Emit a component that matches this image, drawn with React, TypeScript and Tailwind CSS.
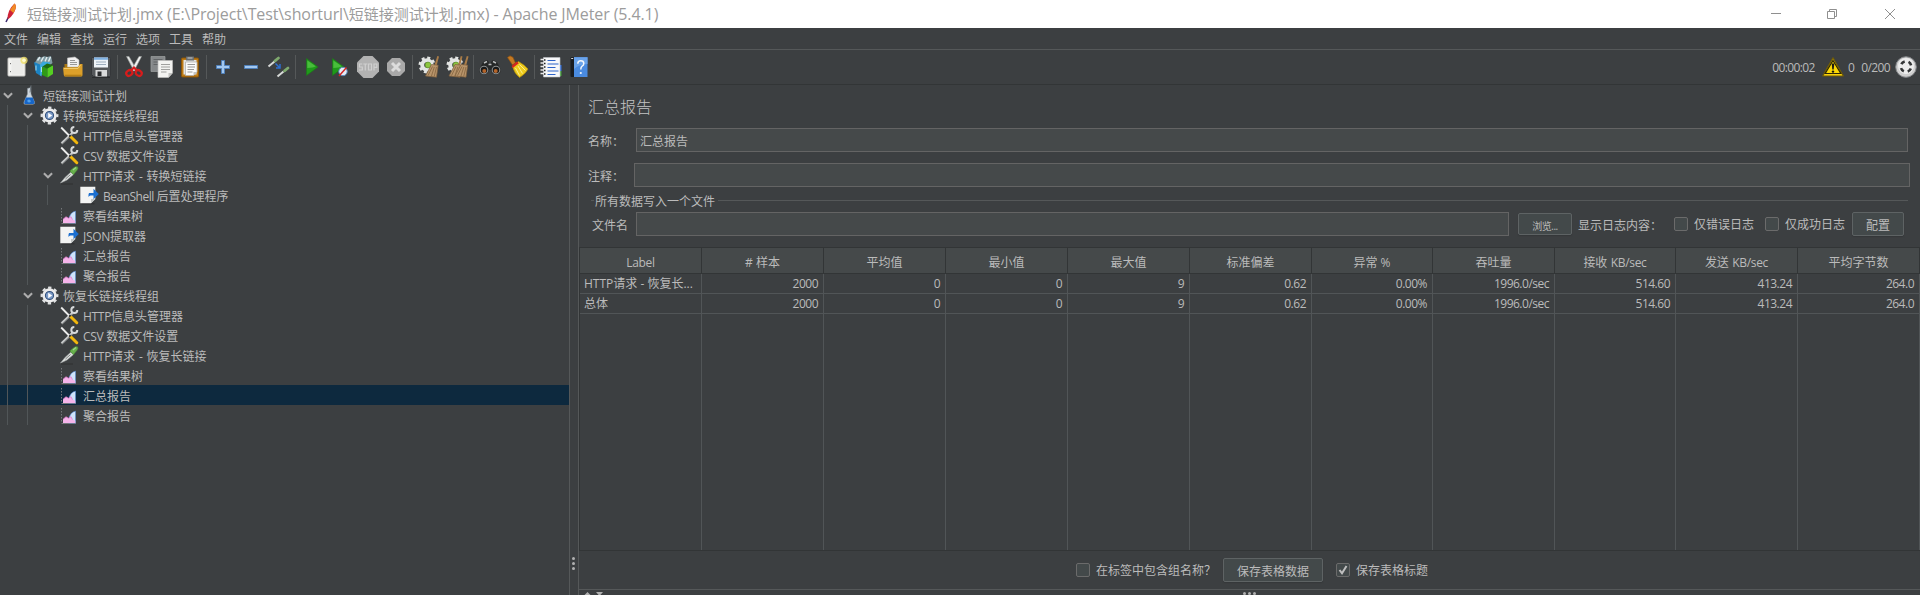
import type { ReactNode } from "react";

/* ---------- toolbar icons, drawn on a 24x24 grid ---------- */

function Icon({ children, size = 24 }: { children: ReactNode; size?: number }) {
  return (
    <svg width={size} height={size} viewBox="0 0 24 24" fill="none" className="block shrink-0">
      {children}
    </svg>
  );
}

function NewIcon() {
  return (
    <Icon>
      <rect x="3" y="3" width="17" height="18" rx="0.8" fill="#f4f4f2" stroke="#c9c9c6" />
      <path d="M6.500 4.500h12v15h-12z" fill="#ebebe9" />
      <path d="M5.500 8v1.200M5.500 16v1.200" stroke="#777" />
      <circle cx="19" cy="5.300" r="3.600" fill="#f0e06a" opacity=".8" />
      <circle cx="19" cy="5.300" r="1.800" fill="#fffbd0" />
    </Icon>
  );
}

function TemplatesIcon() {
  return (
    <Icon>
      <path d="M2 7.500L5 2l4 .5 2-1.500 3 1 4-1 1.500 7-6 5-9.500 2z" fill="#7f9ba3" />
      <path d="M4.500 5.500l2.500-3.500M8 6.500L10.500 2M12 6.500L14 2M15.500 6.500L17.500 2" stroke="#e3ebee" strokeWidth="1.400" />
      <path d="M1 7l6 2.500v11L3 18z" fill="#1b83c4" />
      <path d="M7 9.500l3-3 7 1v3l-7 3-1.500 8L7 20.500z" fill="#39a9dd" />
      <path d="M3 10.500v5M8.500 12v5" stroke="#a8dcf2" />
      <path d="M9 12l5.500 1.500V22.500L9 20z" fill="#2f9a16" />
      <path d="M14.500 13l5.500-2.500v8.500l-5.500 3.500z" fill="#55cf22" />
      <path d="M9 12l5-3.500 6 1.500-5.500 3.500z" fill="#1d6b10" />
    </Icon>
  );
}

function OpenIcon() {
  return (
    <Icon>
      <path d="M3.500 9h3l2 2h12v9h-17z" fill="#a97814" />
      <path d="M6.500 3l7.500-1 4 3v7H6.500z" fill="#f1f1f1" stroke="#bcbcbc" strokeWidth=".6" />
      <path d="M9 5.500h5M9 7.500h7M9 9.500h7" stroke="#8e8e8e" strokeWidth=".9" />
      <path d="M2 12.500h14.500l2.500-3.500h2.500v11q0 1.500-1.500 1.500H4.500Q3 21.500 2.800 20z" fill="#dca02a" />
      <path d="M3 13.500h14l2.500-3.500" stroke="#f2cb6c" />
      <path d="M3.500 20.500h17" stroke="#b67f16" strokeWidth="1.600" />
    </Icon>
  );
}

function SaveIcon() {
  return (
    <Icon>
      <path d="M2.500 3.500q0-1 1-1h17q1 0 1 1v17q0 1-1 1h-16l-2-2z" fill="#55585b" stroke="#35373a" />
      <path d="M5 2.500h14v10H5z" fill="#eef3f8" />
      <path d="M5 2.500h14v2.300H5z" fill="#7fb1e2" />
      <path d="M7 7h10M7 9.500h10" stroke="#9dadbd" />
      <path d="M6.500 15H18v6.500H6.500z" fill="#d9dadb" />
      <path d="M8.500 16.500h4V21h-4z" fill="#292b2d" />
      <path d="M3 22.500h18" stroke="#2a2c2e" />
    </Icon>
  );
}

function CutIcon() {
  return (
    <Icon>
      <path d="M4.500 1.500h2.500L14.500 14.500 12 16z" fill="#e3e5e4" stroke="#9a9d9c" strokeWidth=".6" />
      <path d="M19.500 1.500H17L9.500 14.500 12 16z" fill="#f2f3f2" stroke="#9a9d9c" strokeWidth=".6" />
      <path d="M9 15.500l3-3 3 3" stroke="#d81c1c" strokeWidth="2.200" />
      <ellipse cx="7.300" cy="18" rx="3.200" ry="2.600" stroke="#d81c1c" strokeWidth="2.200" transform="rotate(-35 7.300 18)" />
      <ellipse cx="16.700" cy="18" rx="3.200" ry="2.600" stroke="#d81c1c" strokeWidth="2.200" transform="rotate(35 16.700 18)" />
    </Icon>
  );
}

function CopyIcon() {
  return (
    <Icon>
      <path d="M1 1.500h14v15H1z" fill="#85888a" stroke="#9da0a1" strokeWidth=".7" />
      <path d="M3.500 4.500h9M3.500 7h9M3.500 9.500h9" stroke="#626567" />
      <path d="M8 5.500h14.500V18l-4 4.500H8z" fill="#f3f3f1" stroke="#bcbcba" strokeWidth=".7" />
      <path d="M11 9.500h9M11 12h9M11 14.500h9M11 17h5.500" stroke="#a0a09e" />
      <path d="M18.500 22.500V18h4z" fill="#c2c2c0" />
    </Icon>
  );
}

function PasteIcon() {
  return (
    <Icon>
      <rect x="3.500" y="3" width="17" height="19" rx="1" fill="#bd7a14" stroke="#8a5508" />
      <path d="M5.500 5h13v14.500h-13z" fill="#e4e4e2" />
      <path d="M8 1.500h8v4H8z" fill="#6b6e70" />
      <path d="M9.500 3h5" stroke="#c7c9ca" />
      <path d="M7.500 7h11.500v10l-3.500 3.500h-8z" fill="#fbfbfa" stroke="#a9a9a7" strokeWidth=".7" />
      <path d="M9.500 9.500h7.500M9.500 12h7.500M9.500 14.500h6.500M9.500 17h5" stroke="#989896" />
      <path d="M15.500 20.500V17H19z" fill="#c4c4c2" />
    </Icon>
  );
}

function PlusIcon() {
  return (
    <Icon>
      <path d="M10.500 5.500h3v5h5v3h-5v5h-3v-5h-5v-3h5z" fill="#a3c8f0" stroke="#4f80bb" />
    </Icon>
  );
}

function MinusIcon() {
  return (
    <Icon>
      <path d="M5.500 10.500h13v3h-13z" fill="#a3c8f0" stroke="#4f80bb" />
    </Icon>
  );
}

function ToggleIcon() {
  return (
    <Icon>
      <path d="M1.500 11.500l6-5" stroke="#d7dad8" strokeWidth="2" />
      <path d="M8 5.800L11.500 3" stroke="#7fa96e" strokeWidth="2.800" strokeLinecap="round" />
      <path d="M8.500 8.500l4 4M13 9v4H9" stroke="#2d6fd0" strokeWidth="1.500" />
      <path d="M10.500 21.500l6-5" stroke="#d7dad8" strokeWidth="2" />
      <path d="M17.500 15.800L21 13" stroke="#7fa96e" strokeWidth="2.800" strokeLinecap="round" />
    </Icon>
  );
}

function PlayIcon() {
  return (
    <Icon>
      <path d="M6.500 3.500l11.500 8.500-11.500 8.500z" fill="#1f9a1a" stroke="#1c7a18" strokeWidth=".7" />
      <path d="M7.300 5.500v7.500q6 0 8.500-1.700z" fill="#49bd3c" />
    </Icon>
  );
}

function PlayNoPauseIcon() {
  return (
    <Icon>
      <path d="M4.500 3.500L16 12 4.500 20.500z" fill="#1f9a1a" stroke="#1c7a18" strokeWidth=".7" />
      <path d="M5.300 5.500v7.500q6 0 8.500-1.700z" fill="#49bd3c" />
      <circle cx="15" cy="16.500" r="4.200" fill="#e4ecf5" stroke="#5b87bb" />
      <path d="M11 21l7.500-8.500" stroke="#d32525" strokeWidth="1.500" />
    </Icon>
  );
}

function StopIcon() {
  return (
    <Icon>
      <path d="M7.500 1h9L23 7.500v9L16.500 23h-9L1 16.500v-9z" fill="#b2b2b2" />
      <path d="M6.300 9H3.500v3h2.800v3H3M7.300 9h4M9.300 9v6.500M12.500 9h3v6h-3zM18 15.500V9h2.800v3.300H18" stroke="#cfcfcf" strokeWidth="1.200" />
    </Icon>
  );
}

function ShutdownIcon() {
  return (
    <Icon>
      <path d="M8 3h8l5 5v8l-5 5H8l-5-5V8z" fill="#a9a9a9" />
      <path d="M8 8l8 8M16 8l-8 8" stroke="#dcdcdc" strokeWidth="3" />
    </Icon>
  );
}

function GearShape() {
  return (
    <>
      <circle cx="10" cy="10" r="7.200" stroke="#e3e5e3" strokeWidth="2.600" strokeDasharray="3 2.655" />
      <circle cx="10" cy="10" r="4.800" stroke="#e3e5e3" strokeWidth="4" />
      <circle cx="11" cy="10" r="2.900" fill="#8cc63f" stroke="#5f8f2c" strokeWidth=".7" />
    </>
  );
}

function Brush({ x }: { x: number }) {
  return (
    <g transform={`translate(${x} 0)`}>
      <path d="M20.300 1l1.700.4-2.200 8.600h-2.300z" fill="#a97c48" />
      <path d="M14.500 9.500l6.700.7-1.700 12L8.500 21z" fill="#b8946a" stroke="#80603c" strokeWidth=".7" />
      <path d="M15.500 11.500l-4.500 9M17.300 12l-3 9.500M19.500 12l-2.300 9.500" stroke="#7d5d39" strokeWidth=".7" />
    </g>
  );
}

function ClearIcon() {
  return (
    <Icon>
      <GearShape />
      <Brush x={0} />
    </Icon>
  );
}

function ClearAllIcon() {
  return (
    <Icon>
      <GearShape />
      <Brush x={-4.5} />
      <Brush x={1.5} />
    </Icon>
  );
}

function BinocularsIcon() {
  return (
    <Icon>
      <path d="M5 7l4-2 2 2v3h2V7l2-2 4 2 4 8-1 3-4 1.500-4-1.500-1-3h-2l-1 3-4 1.500-4-1.500-1-3z" fill="#252727" />
      <path d="M6 8l3-1.500M15 6.500L18 8M10.500 9.500h3" stroke="#b7babb" strokeWidth="1.500" />
      <circle cx="6" cy="15" r="3.800" fill="#181919" stroke="#8b8f90" strokeWidth="1.100" />
      <circle cx="18" cy="15" r="3.800" fill="#181919" stroke="#8b8f90" strokeWidth="1.100" />
      <circle cx="6.300" cy="16" r="2" fill="#b5652b" />
      <circle cx="17.700" cy="16" r="2" fill="#b5652b" />
    </Icon>
  );
}

function BroomIcon() {
  return (
    <Icon>
      <path d="M1.500 2.500L4 .8l3 1.500L9.500 8l-3 2z" fill="#c47a24" stroke="#8b5011" strokeWidth=".7" />
      <path d="M6.500 11.500l6-5q5.500 3 9.500 7.500-3 5.500-8.500 8.500-5-4-7-11z" fill="#eecb1d" stroke="#b28d0a" strokeWidth=".7" />
      <path d="M5.500 11L11 6.500l1.800 1.700L6.800 13z" fill="#d6281f" />
      <path d="M9.500 13l4 7.500M12 11l4.500 7.500M13.500 9.500l6 6" stroke="#fbee8d" />
    </Icon>
  );
}

function NotebookIcon() {
  return (
    <Icon>
      <path d="M19 10h3.500v6H19z" fill="#2f6fe0" />
      <path d="M19 16h3.500v5H19z" fill="#3f9f35" />
      <path d="M4.500 2.500H21V22H4.500z" fill="#f7f8fa" stroke="#c0c3c7" strokeWidth=".6" />
      <path d="M8.500 5.500h8M8.500 9h11M8.500 12.500h8M8.500 16h11M8.500 19.500h8" stroke="#2d63c8" strokeWidth="1.200" />
      <path d="M1.500 4.500h4M1.500 8h4M1.500 11.500h4M1.500 15h4M1.500 18.500h4" stroke="#e9e9e9" strokeWidth="1.300" />
      <path d="M5 5h1.500M5 8.500h1.500M5 12h1.500M5 15.500h1.500M5 19h1.500" stroke="#1f2021" strokeWidth="1.500" />
    </Icon>
  );
}

function HelpIcon() {
  return (
    <Icon>
      <path d="M3.500 3q0-.8 1-.8H7V22H4.500q-1 0-1-1z" fill="#191c20" />
      <path d="M4.200 3.500h2" stroke="#d8d8d8" />
      <path d="M7 2.200h13.500V22H7z" fill="#4a8be0" />
      <path d="M7 2.200h13.500V9Q13 9 7 14z" fill="#6aa3ea" />
      <path d="M10.800 8.800q0-3 3-3t3 2.700q0 1.700-1.700 2.700-1.300.9-1.300 3.300" stroke="#f2f6fb" strokeWidth="1.500" />
      <circle cx="13.800" cy="18" r="1.100" fill="#f2f6fb" />
    </Icon>
  );
}

function WarningIcon() {
  return (
    <svg width="22" height="20" viewBox="0 0 22 20" className="block">
      <path d="M11 .8L21.300 19H.7z" fill="#f7cf0c" stroke="#6e5a08" strokeWidth="1.200" strokeLinejoin="round" />
      <path d="M11 3.500L18.800 16.500H3.200z" fill="#fbd705" stroke="#2b2608" strokeWidth="1.200" />
      <path d="M9.700 6.500h2.600l-.6 6h-1.400z" fill="#1b1a12" />
      <circle cx="11" cy="14.600" r="1.200" fill="#1b1a12" />
    </svg>
  );
}

function TargetIcon() {
  return (
    <svg width="22" height="22" viewBox="0 0 22 22" className="block">
      <circle cx="11" cy="11" r="10.300" fill="#cfcfcf" stroke="#85878a" />
      <circle cx="11" cy="10" r="8" fill="#ededed" />
      <circle cx="11" cy="10.500" r="5.200" fill="none" stroke="#333536" strokeWidth="2.600" strokeDasharray="4.170 4" strokeDashoffset="-2" />
    </svg>
  );
}

/* ---------- tree icons ---------- */

function FlaskIcon() {
  return (
    <svg width="20" height="20" viewBox="0 0 20 20" className="block">
      <path d="M7.500 3.500l3.500-1V9l3.500 8q.5 2.300-1.500 2.300H5.300q-2 0-1.300-2.300L7.500 9z" fill="#cdd6dd" stroke="#8d979e" strokeWidth=".5" />
      <path d="M5.900 12.500h6.800l1.800 4.800q.4 1.700-1.300 1.700H5.300q-1.600 0-1-1.700z" fill="#1766c8" />
      <path d="M7.500 15q2-1 3 .5t-1.500 2q-2 0-1.500-2.500z" fill="#4fa0ee" />
      <path d="M11 .5l-1 7" stroke="#6e777d" />
    </svg>
  );
}

function GearIcon() {
  return (
    <svg width="20" height="20" viewBox="0 0 20 20" className="block" fill="none">
      <circle cx="9.500" cy="10.500" r="7.800" stroke="#dfe1e2" strokeWidth="2.300" strokeDasharray="3.300 2.826" strokeDashoffset="1.650" />
      <circle cx="9.500" cy="10.500" r="5.900" fill="#2c4b78" stroke="#ececec" strokeWidth="2.600" />
      <circle cx="9.500" cy="10.500" r="3.600" fill="#7b9ac6" />
      <path d="M8.200 7.800l4 2.700-4 2.700z" fill="#fff" />
    </svg>
  );
}

function ToolsIcon() {
  return (
    <svg width="20" height="20" viewBox="0 0 20 20" className="block" fill="none">
      <path d="M1.500 18.500L12.500 8" stroke="#8a8d8e" strokeWidth="2.600" />
      <path d="M1.500 18L12.500 7.500" stroke="#d0d2d3" strokeWidth="1.200" />
      <path d="M17.300 5a3 3 0 1 1-3-3" stroke="#d7d9da" strokeWidth="2" />
      <path d="M1.200 2.500l8.300 8.500" stroke="#ecedec" strokeWidth="1.800" />
      <path d="M11 12l5.800 5.700" stroke="#f2b70c" strokeWidth="3" strokeLinecap="round" />
      <path d="M9.300 10.300l1.200 1.200" stroke="#2b2c2c" strokeWidth="2" />
    </svg>
  );
}

function DropperIcon() {
  return (
    <svg width="20" height="20" viewBox="0 0 20 20" className="block" fill="none">
      <path d="M1 19h12" stroke="#2e3031" />
      <path d="M.5 18l4.500-5.500L11 7l2.500 2.500L7 15z" fill="#dfe2e0" stroke="#a5a8a7" strokeWidth=".6" />
      <path d="M5.500 14L10.500 9.500" stroke="#7c7f7e" />
      <path d="M9.800 6l1.500-1.500 3-2.200Q16 1 17.500 1.800q1.200 1-.2 3.200l-2.500 3-1.300 1.800z" fill="#67b04c" stroke="#447f34" strokeWidth=".6" />
      <path d="M13 5l3-2.500" stroke="#a3d58e" strokeWidth="1.200" />
    </svg>
  );
}

function PageArrowIcon() {
  return (
    <svg width="20" height="20" viewBox="0 0 20 20" className="block" fill="none">
      <path d="M1.500 18.800h13" stroke="#2b2d2e" />
      <path d="M.3 1.800h15V14l-4.300 4.300H.3z" fill="#f3f4f3" />
      <path d="M11 18.300V14h4.300z" fill="#c3c6c6" />
      <path d="M9 8h4.500V3.800L18.800 9l-5.300 5.200v-3.700h-3q-1.300.3-2 1.500-.3-2.500.5-4z" fill="#1b6fd0" />
    </svg>
  );
}

function ChartIcon() {
  return (
    <svg width="20" height="20" viewBox="0 0 20 20" className="block" fill="none">
      <path d="M1.500 3v15.500" stroke="#74777a" strokeDasharray="1.500 1.500" />
      <path d="M2 18.500h14" stroke="#74777a" />
      <path d="M8.500 14.500q2-7.700 7-8.300V18h-7z" fill="#cfe3fa" stroke="#5a8fd6" strokeWidth=".6" />
      <path d="M3 18v-3.700l3-2.600 2.500 1.500L11 11.700l1.500 3 2.800 1V18z" fill="#f5b4ea" />
      <path d="M3 14.300l3-2.600 2.500 1.500L11 11.700l1.500 3" stroke="#dd74c6" strokeWidth=".7" />
    </svg>
  );
}

function Chevron() {
  return (
    <svg width="10" height="7" viewBox="0 0 10 7" className="block" fill="none">
      <path d="M.9 1.200L5 5.300l4.100-4.100" stroke="#adadad" strokeWidth="2" />
    </svg>
  );
}

/* ---------- data ---------- */

const toolbarGroups: ReactNode[][] = [
  [<NewIcon />, <TemplatesIcon />, <OpenIcon />, <SaveIcon />],
  [<CutIcon />, <CopyIcon />, <PasteIcon />],
  [<PlusIcon />, <MinusIcon />, <ToggleIcon />],
  [<PlayIcon />, <PlayNoPauseIcon />, <StopIcon />, <ShutdownIcon />],
  [<ClearIcon />, <ClearAllIcon />],
  [<BinocularsIcon />, <BroomIcon />],
  [<NotebookIcon />, <HelpIcon />],
];

type TreeNode = { depth: number; icon: ReactNode; latin?: string; text: string; open?: boolean; selected?: boolean };

const tree: TreeNode[] = [
  { depth: 0, icon: <FlaskIcon />, text: "短链接测试计划", open: true },
  { depth: 1, icon: <GearIcon />, text: "转换短链接线程组", open: true },
  { depth: 2, icon: <ToolsIcon />, latin: "HTTP", text: "信息头管理器" },
  { depth: 2, icon: <ToolsIcon />, latin: "CSV ", text: "数据文件设置" },
  { depth: 2, icon: <DropperIcon />, latin: "HTTP", text: "请求 - 转换短链接", open: true },
  { depth: 3, icon: <PageArrowIcon />, latin: "BeanShell ", text: "后置处理程序" },
  { depth: 2, icon: <ChartIcon />, text: "察看结果树" },
  { depth: 2, icon: <PageArrowIcon />, latin: "JSON", text: "提取器" },
  { depth: 2, icon: <ChartIcon />, text: "汇总报告" },
  { depth: 2, icon: <ChartIcon />, text: "聚合报告" },
  { depth: 1, icon: <GearIcon />, text: "恢复长链接线程组", open: true },
  { depth: 2, icon: <ToolsIcon />, latin: "HTTP", text: "信息头管理器" },
  { depth: 2, icon: <ToolsIcon />, latin: "CSV ", text: "数据文件设置" },
  { depth: 2, icon: <DropperIcon />, latin: "HTTP", text: "请求 - 恢复长链接" },
  { depth: 2, icon: <ChartIcon />, text: "察看结果树" },
  { depth: 2, icon: <ChartIcon />, text: "汇总报告", selected: true },
  { depth: 2, icon: <ChartIcon />, text: "聚合报告" },
];

const columns = ["Label", "# 样本", "平均值", "最小值", "最大值", "标准偏差", "异常 %", "吞吐量", "接收 KB/sec", "发送 KB/sec", "平均字节数"];

const rows = [
  ["HTTP请求 - 恢复长...", "2000", "0", "0", "9", "0.62", "0.00%", "1996.0/sec", "514.60", "413.24", "264.0"],
  ["总体", "2000", "0", "0", "9", "0.62", "0.00%", "1996.0/sec", "514.60", "413.24", "264.0"],
];

const gridCols = "grid grid-cols-[122px_122px_122px_122px_122px_122px_121px_122px_121px_122px_122px]";

/* ---------- pieces ---------- */

function TreeRow({ node }: { node: TreeNode }) {
  return (
    <div className={`flex h-5 items-center pl-[7px] ${node.selected ? "bg-[#0d293e]" : ""}`}>
      {Array.from({ length: node.depth }, (_, i) => (
        <span key={i} className="h-5 w-5 shrink-0 border-l border-[#515658]" />
      ))}
      <span className="-ml-[4px] flex w-[17px] shrink-0 items-center">{node.open && <Chevron />}</span>
      <span className="mr-[3px] shrink-0">{node.icon}</span>
      {node.latin && (
        <span className={`pt-[3px] whitespace-pre ${node.latin.length > 4 ? "tracking-[-0.5px]" : "tracking-[-0.3px]"}`}>{node.latin}</span>
      )}
      <span className="pt-[3px] [word-spacing:0.7px]">{node.text}</span>
    </div>
  );
}

function CheckBox({ checked = false }: { checked?: boolean }) {
  return (
    <span className="flex size-[14px] shrink-0 items-center justify-center rounded-[2px] border border-[#6b6b6b] bg-[#43494a]">
      {checked && (
        <svg width="12" height="12" viewBox="0 0 12 12" fill="none">
          <path d="M2.500 6l2.500 3.200L9.500 2" stroke="#bfbfbf" strokeWidth="2" />
        </svg>
      )}
    </span>
  );
}

function Field({ className, children }: { className: string; children?: ReactNode }) {
  return <div className={`flex h-6 items-center border border-[#646464] bg-[#45494a] pt-[3px] pl-[3px] ${className}`}>{children}</div>;
}

function Button({ className, children }: { className: string; children: ReactNode }) {
  return (
    <div className={`flex shrink-0 items-center justify-center rounded-[2px] border border-[#5e6364] bg-[#43494a] pt-[3px] shadow-[0_1px_1px_#35383a] ${className}`}>
      {children}
    </div>
  );
}

function Latin({ children }: { children: string }) {
  return <span className="text-[16px] tracking-[-0.1px]">{children}</span>;
}

export default function App() {
  return (
    <div className="flex h-[595px] w-[1920px] flex-col overflow-hidden bg-[#3c3f41] font-['Open_Sans','Noto_Sans_CJK_SC',sans-serif] text-[12px] leading-none font-normal whitespace-nowrap text-[#bbb]">
      {/* title bar */}
      <header className="flex h-7 shrink-0 items-center bg-white">
        <svg width="27" height="28" viewBox="0 0 27 28" fill="none">
          <path d="M6 22l2.500-5" stroke="#3c2a6e" strokeWidth="1.500" />
          <path d="M7.500 19Q7.500 10 14.500 3.500q2 1.500 1 5.500-2 6-6.500 9.500z" fill="#cf2237" />
          <path d="M10 10l4.500-6.500q2 1.500 1 5.500l-2 4z" fill="#f08a24" />
        </svg>
        <span className="text-[15px] text-[#9c9c9c]">
          短链接测试计划
          <Latin>.jmx (E:\Project\Test\shorturl\</Latin>
          短链接测试计划
          <Latin>.jmx) - Apache JMeter (5.4.1)</Latin>
        </span>
        <svg width="126" height="12" viewBox="0 0 126 12" fill="none" stroke="#8f8f8f" className="mr-[24px] ml-auto">
          <path d="M1 5.500h10" />
          <path d="M57.500 3.500h7v7h-7zM59.500 3.500v-2h7v7h-2" />
          <path d="M115 1l10 10M125 1l-10 10" />
        </svg>
      </header>

      {/* menu */}
      <nav className="flex h-[22px] shrink-0 items-center gap-[9px] border-b border-[#555859] pt-[2px] pl-[4px]">
        {["文件", "编辑", "查找", "运行", "选项", "工具", "帮助"].map((m) => (
          <span key={m}>{m}</span>
        ))}
      </nav>

      {/* toolbar */}
      <div className="flex h-[35px] shrink-0 items-center border-b border-[#323536] pl-[3px]">
        {toolbarGroups.map((group, g) => (
          <div key={g} className="flex items-center">
            {g > 0 && (
              <span className="flex w-[5px] justify-center">
                <span className="h-6 w-px bg-[#555859]" />
              </span>
            )}
            {group.map((icon, i) => (
              <span key={i} className="flex w-7 justify-center">
                {icon}
              </span>
            ))}
          </div>
        ))}
        <div className="mr-[3px] ml-auto flex items-center tracking-[-0.6px]">
          <span className="pt-[2px]">00:00:02</span>
          <span className="mr-[4px] ml-[7px]">
            <WarningIcon />
          </span>
          <span className="pt-[2px]">0</span>
          <span className="mr-[5px] ml-[7px] pt-[2px]">0/200</span>
          <TargetIcon />
        </div>
      </div>

      <div className="flex min-h-0 flex-1">
        {/* tree */}
        <aside className="w-[570px] shrink-0 border-r border-[#555859]">
          {tree.map((node, i) => (
            <TreeRow key={i} node={node} />
          ))}
        </aside>
        <div className="flex w-2 shrink-0 flex-col gap-[2px] pt-[472px] pl-[2px]">
          <span className="size-[3px] rounded-full bg-[#b0b0b0]" />
          <span className="size-[3px] rounded-full bg-[#b0b0b0]" />
          <span className="size-[3px] rounded-full bg-[#b0b0b0]" />
        </div>

        <main className="flex min-w-0 flex-1 flex-col border-l border-[#555859]">
          <h1 className="mt-[12px] flex h-[20px] shrink-0 items-center pl-[9px] text-[16px] font-light text-[#c4c4c4]">汇总报告</h1>

          <div className="mt-[11px] flex shrink-0 items-center pl-[9px]">
            <span className="w-[48px] pt-[3px]">名称：</span>
            <Field className="w-[1272px]">汇总报告</Field>
          </div>
          <div className="mt-[11px] flex shrink-0 items-center pl-[9px]">
            <span className="w-[46px] pt-[3px]">注释：</span>
            <Field className="w-[1276px]" />
          </div>

          <div className="mt-[6px] flex h-[15px] shrink-0 items-center pl-[12px]">
            <span className="h-px w-[3px] bg-[#555859]" />
            <span className="mx-px pt-[2px]">所有数据写入一个文件</span>
            <span className="mr-[12px] ml-[2px] h-px flex-1 bg-[#555859]" />
          </div>

          <div className="mt-[4px] flex shrink-0 items-center pl-[13px]">
            <span className="w-[44px] pt-[3px]">文件名</span>
            <Field className="w-[873px]" />
            <Button className="ml-[9px] h-[22px] w-[54px] text-[10px] tracking-[-0.5px]">浏览...</Button>
            <span className="ml-[6px] w-[96px] pt-[3px]">显示日志内容：</span>
            <CheckBox />
            <span className="ml-[6px] w-[71px] pt-[2px]">仅错误日志</span>
            <CheckBox />
            <span className="ml-[6px] w-[67px] pt-[2px]">仅成功日志</span>
            <Button className="h-6 w-[52px]">配置</Button>
          </div>

          {/* result table */}
          <section className="mt-[11px] flex h-[304px] shrink-0 flex-col border-y border-l border-[#323536]">
            <div className={`${gridCols} h-[26px] shrink-0 border-b border-[#323536] bg-[#45494a]`}>
              {columns.map((c) => (
                <div
                  key={c}
                  className={`flex items-center justify-center border-r border-[#323536] pt-[4px] ${/[a-z]/.test(c) ? "tracking-[-0.3px] [word-spacing:1px]" : ""}`}
                >
                  {c}
                </div>
              ))}
            </div>
            {rows.map((row, r) => (
              <div key={r} className={`${gridCols} h-5 shrink-0 border-b border-[#515557]`}>
                {row.map((cell, c) => (
                  <div
                    key={c}
                    className={`flex items-center border-r border-[#515557] pt-px ${c === 0 ? "pl-[4px]" : "justify-end pr-[5px] tracking-[-0.5px]"}`}
                  >
                    {cell}
                  </div>
                ))}
              </div>
            ))}
            <div className={`${gridCols} flex-1`}>
              {columns.map((c) => (
                <div key={c} className="border-r border-[#515557]" />
              ))}
            </div>
          </section>

          <div className="flex h-[38px] shrink-0 items-center pl-[497px]">
            <CheckBox />
            <span className="ml-[6px] w-[127px] pt-[2px]">在标签中包含组名称？</span>
            <Button className="h-6 w-[100px]">保存表格数据</Button>
            <span className="w-[13px]" />
            <CheckBox checked />
            <span className="ml-[6px] pt-[2px]">保存表格标题</span>
          </div>

          <div className="flex h-[6px] shrink-0 items-start overflow-hidden border-t border-[#555859] pt-[2px] pl-[5px]">
            <svg width="20" height="4" viewBox="0 0 20 4" fill="#b0b0b0">
              <path d="M3.500 0L7 3.500H0zM12 0h7l-3.500 4z" />
            </svg>
            <span className="ml-[639px] flex gap-[2px]">
              <span className="size-[3px] rounded-full bg-[#b0b0b0]" />
              <span className="size-[3px] rounded-full bg-[#b0b0b0]" />
              <span className="size-[3px] rounded-full bg-[#b0b0b0]" />
            </span>
          </div>
        </main>
      </div>
    </div>
  );
}
